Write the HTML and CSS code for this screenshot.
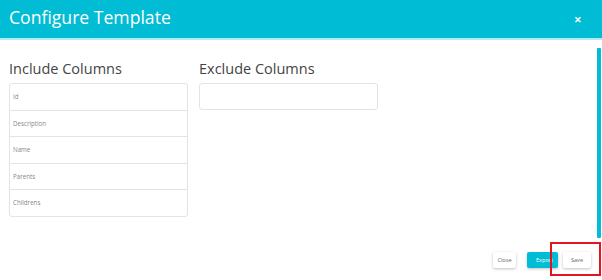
FILE: index.html
```html
<!DOCTYPE html>
<html lang="en">
<head>
  <meta charset="UTF-8">
  <title>Configure Template</title>
  <link rel="stylesheet" href="styles.css">
</head>
<body>
  <div class="modal">
    <div class="modal-header">
      <h1>Configure Template</h1>
      <span class="close-x">&#x2715;</span>
    </div>

    <div class="modal-body">
      <div class="column include">
        <h2>Include Columns</h2>
        <ul class="col-list">
          <li>Id</li>
          <li>Description</li>
          <li>Name</li>
          <li>Parents</li>
          <li>Childrens</li>
        </ul>
      </div>
      <div class="column exclude">
        <h2>Exclude Columns</h2>
        <ul class="col-list empty"></ul>
      </div>
    </div>

    <div class="modal-footer">
      <button class="btn">Close</button>
      <button class="btn btn-primary">Export</button>
      <button class="btn btn-save">Save</button>
    </div>

    <div class="scrollbar"></div>
    <div class="highlight"></div>
  </div>
</body>
</html>
```

FILE: styles.css
```css
:root {
  --teal: #00bcd4;
  --teal-light: #b2ebf2;
  --border: #e3e3e3;
  --text: #555;
}

body {
  margin: 0;
  font-family: 'Open Sans', 'Noto Sans', sans-serif;
  color: var(--text);
  background: #fff;
}

.modal {
  position: relative;
  width: 602px;
  height: 280px;
  overflow: hidden;
}

.modal-header {
  height: 38px;
  background: var(--teal);
  border-bottom: 2px solid var(--teal-light);
  display: flex;
  align-items: center;
  justify-content: space-between;
  padding: 0 20px 0 9px;
}

.modal-header h1 {
  margin: 0 0 4px;
  font-size: 17.6px;
  font-weight: 400;
  color: #fff;
}

.close-x {
  color: #fff;
  font-size: 9px;
  font-weight: 700;
  margin-top: 1px;
}

.modal-body {
  display: flex;
  gap: 11px;
  padding: 20px 0 0 9px;
  height: 172px;
}

.column {
  width: 179px;
}

.column h2 {
  margin: 0 0 5px;
  font-size: 14.5px;
  font-weight: 400;
  color: #444;
  line-height: 18px;
}

.col-list {
  list-style: none;
  margin: 0;
  padding: 0;
  border: 1px solid var(--border);
  border-radius: 3px;
}

.col-list li {
  height: 25.5px;
  line-height: 25.5px;
  padding-left: 3px;
  font-size: 6.2px;
  color: #888;
  border-bottom: 1px solid var(--border);
}

.col-list li:last-child {
  border-bottom: none;
}

.col-list.empty {
  height: 25px;
}

.modal-footer {
  display: flex;
  justify-content: flex-end;
  align-items: center;
  gap: 11px;
  padding: 20px 10px 0 0;
}

.btn {
  height: 16px;
  width: 23px;
  padding: 0;
  font-family: inherit;
  font-size: 5.6px;
  color: #666;
  background: #fff;
  border: none;
  border-radius: 2px;
  box-shadow: 0 1px 3px rgba(0, 0, 0, 0.25);
  white-space: nowrap;
  overflow: hidden;
}

.btn-primary {
  width: 31px;
  padding: 0 0 0 9px;
  text-align: left;
  background: var(--teal);
  color: #fff;
}

.btn-save {
  width: 28px;
  margin-left: -6px;
  margin-right: 1px;
}

.scrollbar {
  position: absolute;
  right: 1px;
  top: 48px;
  width: 4px;
  height: 190px;
  background: var(--teal);
  border-radius: 1px;
}

.highlight {
  position: absolute;
  left: 550px;
  top: 242px;
  width: 47px;
  height: 30px;
  border: 2px solid #e3141f;
  pointer-events: none;
}
```
